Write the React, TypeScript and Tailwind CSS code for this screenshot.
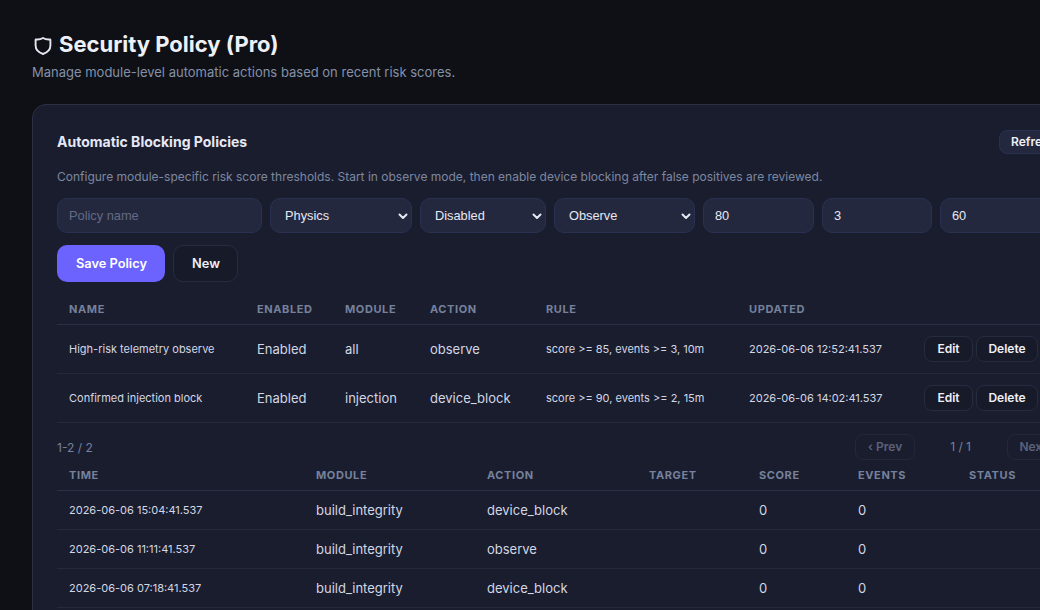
import React from "react";

function Shield() {
  return (
    <svg width="20" height="20" viewBox="0 0 20 20" fill="none" stroke="#e5e7f0" strokeWidth="1.9" strokeLinecap="round" strokeLinejoin="round" className="mt-[3px] shrink-0">
      <path d="M3 3.4C5 3.6 8 3.2 10 2c2 1.200 5 1.600 7 1.400.3 0 .4.2.4.4v5.800c0 4.200-3.200 7-7.400 8.400C5.800 16.600 2.600 13.800 2.600 9.600V3.800c0-.2.1-.4.4-.4z" />
    </svg>
  );
}

const inputCls = "h-[35px] shrink-0 rounded-[10px] border border-[#2a3050] bg-[#24283f] font-['Liberation_Sans',sans-serif] text-[12.8px] text-[#e6e8f2] outline-none";
const th = "px-3 text-left text-[11px] font-bold tracking-[0.6px] text-[#76819c] border-b border-[#2a3146] uppercase";
const td = "px-3 pt-[1px] text-[13px] text-[#d3d7e4] border-b border-[#242a3d]";
const tdTop = "px-3 pt-[3px] text-[13px] text-[#d3d7e4] border-b border-[#242a3d]";
const tdSm = "px-3 pt-[1px] text-[11px] text-[#d3d7e4] border-b border-[#242a3d] whitespace-nowrap";

function Sel({ w, value, opts }: { w: string; value: string; opts: string[] }) {
  return (
    <div className={`${w} relative shrink-0`}>
      <select defaultValue={value} className={`${inputCls} w-full appearance-none pl-[14px]`}>
        {opts.map((o) => (
          <option key={o}>{o}</option>
        ))}
      </select>
      <svg width="12" height="12" viewBox="0 0 24 24" fill="none" stroke="#e6e8f2" strokeWidth="4" strokeLinecap="round" strokeLinejoin="round" className="pointer-events-none absolute right-[3px] top-[12px]">
        <path d="m5 9 7 7 7-7" />
      </svg>
    </div>
  );
}

function SmallBtn({ children, w }: { children: React.ReactNode; w: string }) {
  return (
    <button className={`${w} h-[26px] rounded-[8px] border border-[#262c40] bg-[#171a29] text-[12px] font-semibold text-[#eef0f6]`}>
      {children}
    </button>
  );
}

const policies = [
  ["High-risk telemetry observe", "Enabled", "all", "observe", "score >= 85, events >= 3, 10m", "2026-06-06 12:52:41.537"],
  ["Confirmed injection block", "Enabled", "injection", "device_block", "score >= 90, events >= 2, 15m", "2026-06-06 14:02:41.537"],
];

const events = [
  ["2026-06-06 15:04:41.537", "build_integrity", "device_block"],
  ["2026-06-06 11:11:41.537", "build_integrity", "observe"],
  ["2026-06-06 07:18:41.537", "build_integrity", "device_block"],
];

export default function App() {
  return (
    <div className="h-[610px] w-[1040px] overflow-hidden bg-[#0e1016] font-['Inter',sans-serif]">
      <div className="w-[1200px] pl-8 pt-[30px]">
        <h1 className="flex items-center gap-[6px] pl-[1px] text-[22px] font-bold leading-[28px] text-[#eef0f8]">
          <Shield />
          Security Policy (Pro)
        </h1>
        <p className="mt-[5px] text-[13px] leading-[18px] text-[#8490a8]">
          Manage module-level automatic actions based on recent risk scores.
        </p>

        <div className="mt-[23px] rounded-t-[14px] border border-[#2b3145] bg-[#1a1d2e] pb-6 pl-6 pr-6 pt-[24px]">
          <div className="flex w-[1022px] items-center justify-between">
            <h2 className="text-[14px] font-bold leading-[26px] text-[#e6e8f5]">Automatic Blocking Policies</h2>
            <button className="h-[24px] w-[80px] rounded-[8px] border border-[#2a3050] bg-[#24283f] pl-[11px] text-left text-[12px] font-semibold text-[#eef0f6]">
              Refresh
            </button>
          </div>

          <p className="mt-[13px] text-[12px] leading-[18px] text-[#7d88a0]">
            Configure module-specific risk score thresholds. Start in observe mode, then enable device blocking after false positives are reviewed.
          </p>

          <div className="mt-[12px] flex gap-2">
            <input placeholder="Policy name" className={`${inputCls} w-[205px] px-[11px] placeholder:text-[#636b84]`} />
            <Sel w="w-[142px]" value="Physics" opts={["Physics"]} />
            <Sel w="w-[126px]" value="Disabled" opts={["Disabled"]} />
            <Sel w="w-[141px]" value="Observe" opts={["Observe"]} />
            <input defaultValue="80" className={`${inputCls} w-[111px] px-[11px]`} />
            <input defaultValue="3" className={`${inputCls} w-[110px] px-[11px]`} />
            <input defaultValue="60" className={`${inputCls} w-[110px] px-[11px]`} />
          </div>

          <div className="mt-[12px] flex gap-2">
            <button className="h-[37px] w-[108px] rounded-[10px] bg-[#6c63ff] pl-[1px] text-[12.8px] font-semibold text-white">Save Policy</button>
            <button className="h-[37px] w-[65px] rounded-[10px] border border-[#262c40] bg-[#171a29] pl-[1px] text-[12.8px] font-semibold text-[#eef0f6]">New</button>
          </div>

          <table className="mt-[12px] w-[983px] table-fixed border-collapse">
            <colgroup>
              <col className="w-[188px]" />
              <col className="w-[88px]" />
              <col className="w-[85px]" />
              <col className="w-[116px]" />
              <col className="w-[203px]" />
              <col className="w-[175px]" />
              <col className="w-[128px]" />
            </colgroup>
            <thead>
              <tr className="h-[30px]">
                {["Name", "Enabled", "Module", "Action", "Rule", "Updated", ""].map((h, i) => (
                  <th key={i} className={th}>{h}</th>
                ))}
              </tr>
            </thead>
            <tbody>
              {policies.map((p) => (
                <tr key={p[0]} className="h-[49px]">
                  <td className={tdSm}>{p[0]}</td>
                  <td className={tdTop}>{p[1]}</td>
                  <td className={tdTop}>{p[2]}</td>
                  <td className={tdTop}>{p[3]}</td>
                  <td className={tdSm}>{p[4]}</td>
                  <td className={tdSm}>{p[5]}</td>
                  <td className="border-b border-[#242a3d] px-0">
                    <div className="flex justify-end gap-[3px] pr-[2px]">
                      <SmallBtn w="w-[49px]">Edit</SmallBtn>
                      <SmallBtn w="w-[62px]">Delete</SmallBtn>
                    </div>
                  </td>
                </tr>
              ))}
            </tbody>
          </table>

          <div className="mt-[11px] flex h-[26px] w-[1010px] items-center justify-between text-[12px] text-[#76819c]">
            <span className="mt-[2px]">1-2 / 2</span>
            <div className="flex items-center">
              <button className="h-[26px] w-[60px] rounded-[8px] border border-[#232839] text-[12px] font-semibold text-[#5b627a]">‹ Prev</button>
              <span className="ml-[35px] mr-[36px] mt-[1px]">1 / 1</span>
              <button className="h-[26px] w-[60px] rounded-[8px] border border-[#232839] text-[12px] font-semibold text-[#5b627a]">Next ›</button>
            </div>
          </div>

          <table className="w-[1100px] table-fixed border-collapse">
            <colgroup>
              <col className="w-[247px]" />
              <col className="w-[171px]" />
              <col className="w-[162px]" />
              <col className="w-[110px]" />
              <col className="w-[99px]" />
              <col className="w-[111px]" />
              <col className="w-[200px]" />
            </colgroup>
            <thead>
              <tr className="h-[31px]">
                {["Time", "Module", "Action", "Target", "Score", "Events", "Status"].map((h) => (
                  <th key={h} className={th}>{h}</th>
                ))}
              </tr>
            </thead>
            <tbody>
              {events.map((e) => (
                <tr key={e[0]} className="h-[39px]">
                  <td className={tdSm}>{e[0]}</td>
                  <td className={td}>{e[1]}</td>
                  <td className={td}>{e[2]}</td>
                  <td className={td}></td>
                  <td className={td}>0</td>
                  <td className={td}>0</td>
                  <td className={td}></td>
                </tr>
              ))}
            </tbody>
          </table>
        </div>
      </div>
    </div>
  );
}
